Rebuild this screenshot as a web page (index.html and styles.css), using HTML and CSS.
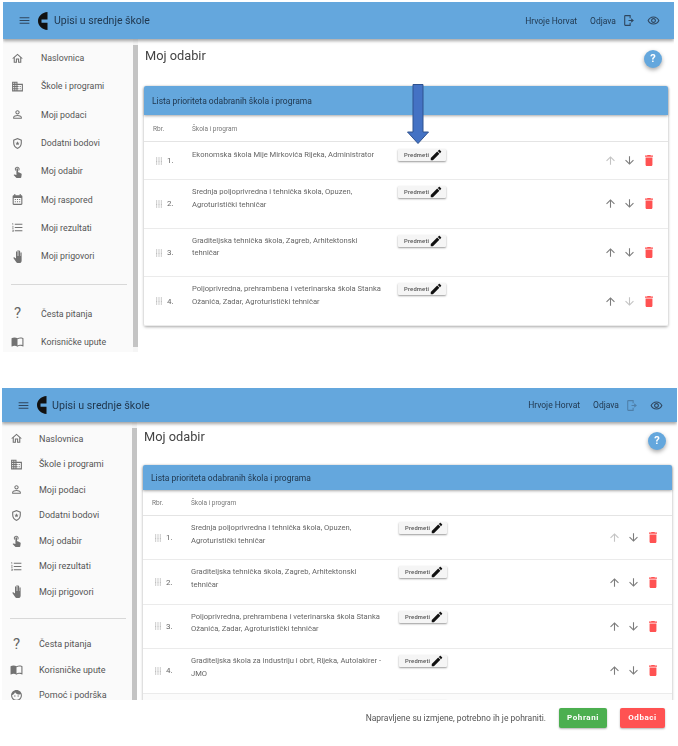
FILE: index.html
```html
<!DOCTYPE html>
<html lang="en">
  <head>
    <meta charset="UTF-8" />
    <meta name="viewport" content="width=device-width, initial-scale=1.0" />
    <title>Moj odabir</title>
    <link rel="stylesheet" href="styles.css">
  </head>

  <body>
    <svg class="sprite" aria-hidden="true">
      <symbol id="i-menu" viewBox="0 0 24 24"><path d="M3 18h18v-2H3v2zm0-5h18v-2H3v2zm0-7v2h18V6H3z"/></symbol>
      <symbol id="i-logo" viewBox="0 0 10 18"><path d="M9.500 0C4 .6 0 4.300 0 9s4 8.400 9.500 9v-7.200H3.500V7.400h6z"/></symbol>
      <symbol id="i-home" viewBox="0 0 24 24"><path d="M12 5.690l5 4.500V18h-2v-6H9v6H7v-7.810l5-4.500M12 3L2 12h3v8h6v-6h2v6h6v-8h3L12 3z"/></symbol>
      <symbol id="i-domain" viewBox="0 0 24 24"><path d="M12 7V3H2v18h20V7H12zM6 19H4v-2h2v2zm0-4H4v-2h2v2zm0-4H4V9h2v2zm0-4H4V5h2v2zm4 12H8v-2h2v2zm0-4H8v-2h2v2zm0-4H8V9h2v2zm0-4H8V5h2v2zm10 12h-8v-2h2v-2h-2v-2h2v-2h-2V9h8v10zm-2-8h-2v2h2v-2zm0 4h-2v2h2v-2z"/></symbol>
      <symbol id="i-person" viewBox="0 0 24 24"><path d="M12 5.900c1.160 0 2.100.94 2.100 2.100s-.94 2.100-2.100 2.100S9.900 9.160 9.900 8s.94-2.100 2.100-2.100m0 9c2.970 0 6.100 1.460 6.100 2.100v1.100H5.900V17c0-.64 3.130-2.100 6.100-2.100M12 4C9.790 4 8 5.790 8 8s1.790 4 4 4 4-1.790 4-4-1.790-4-4-4zm0 9c-2.670 0-8 1.340-8 4v3h16v-3c0-2.660-5.330-4-8-4z"/></symbol>
      <symbol id="i-shield" viewBox="0 0 24 24"><path d="M12 2L4 5v6c0 5 3.400 9.700 8 11 4.600-1.300 8-6 8-11V5l-8-3zm6 9c0 4-2.500 7.700-6 8.900-3.500-1.200-6-4.900-6-8.900V6.400l6-2.200 6 2.200V11z"/><path d="M12 8l1.100 2.500 2.700.2-2 1.800.6 2.600-2.400-1.400-2.400 1.400.6-2.600-2-1.800 2.700-.2z"/></symbol>
      <symbol id="i-touch" viewBox="0 0 24 24"><path d="M9 11.240V7.500C9 6.120 10.120 5 11.500 5S14 6.120 14 7.500v3.740c1.210-.81 2-2.180 2-3.740C16 5.010 13.990 3 11.500 3S7 5.010 7 7.500c0 1.560.79 2.930 2 3.740zm9.840 4.630l-4.540-2.260c-.17-.07-.35-.11-.54-.11H13v-6c0-.83-.67-1.500-1.500-1.500S10 6.670 10 7.500v10.740l-3.430-.72c-.08-.01-.15-.03-.24-.03-.31 0-.59.13-.79.33l-.79.8 4.940 4.940c.27.27.65.44 1.060.44h6.790c.75 0 1.330-.55 1.440-1.280l.75-5.270c.01-.07.02-.14.02-.2 0-.62-.38-1.160-.91-1.380z"/></symbol>
      <symbol id="i-event" viewBox="0 0 24 24"><path d="M19 4h-1V2h-2v2H8V2H6v2H5c-1.100 0-2 .9-2 2v14c0 1.100.9 2 2 2h14c1.100 0 2-.9 2-2V6c0-1.100-.9-2-2-2zm0 16H5V9h14v11zM7 11h2v2H7zm4 0h2v2h-2zm4 0h2v2h-2zm-8 4h2v2H7zm4 0h2v2h-2zm4 0h2v2h-2z"/></symbol>
      <symbol id="i-list" viewBox="0 0 24 24"><path d="M2 17h2v.5H3v1h1v.5H2v1h3v-4H2v1zm1-9h1V4H2v1h1v3zm-1 3h1.800L2 13.100v.9h3v-1H3.200L5 10.900V10H2v1zm5-6v2h14V5H7zm0 14h14v-2H7v2zm0-6h14v-2H7v2z"/></symbol>
      <symbol id="i-hand" viewBox="0 0 24 24" preserveAspectRatio="none"><path d="M23 5.500V20c0 2.200-1.800 4-4 4h-7.300c-1.080 0-2.100-.43-2.850-1.190L1 14.830s1.260-1.230 1.300-1.250c.22-.19.49-.29.79-.29.22 0 .42.06.6.16.04.01 4.310 2.460 4.310 2.460V4c0-.83.67-1.500 1.500-1.500S11 3.170 11 4v7h1V1.500c0-.83.67-1.500 1.500-1.500S15 .67 15 1.500V11h1V2.500c0-.83.67-1.500 1.500-1.500s1.500.67 1.500 1.500V11h1V5.500c0-.83.67-1.500 1.500-1.500s1.500.67 1.500 1.500z"/></symbol>
      <symbol id="i-book" viewBox="0 0 24 24"><path d="M21 5c-1.110-.35-2.330-.5-3.500-.5-1.950 0-4.050.4-5.500 1.500-1.450-1.100-3.550-1.500-5.500-1.500S2.450 4.900 1 6v14.650c0 .25.25.5.5.5.1 0 .15-.05.25-.05C3.100 20.450 5.050 20 6.500 20c1.950 0 4.050.4 5.500 1.500 1.350-.85 3.800-1.500 5.500-1.500 1.650 0 3.350.3 4.750 1.050.1.05.15.05.25.05.25 0 .5-.25.5-.5V6c-.6-.45-1.250-.75-2-1zm0 13.500c-1.100-.35-2.300-.5-3.500-.5-1.700 0-4.150.65-5.500 1.500V8c1.350-.85 3.800-1.500 5.500-1.500 1.200 0 2.400.15 3.500.5v11.500z"/></symbol>
      <symbol id="i-face" viewBox="0 0 24 24"><path d="M9 11.750c-.69 0-1.250.56-1.250 1.250s.56 1.250 1.250 1.250 1.250-.56 1.250-1.250-.56-1.250-1.250-1.250zm6 0c-.69 0-1.250.56-1.250 1.250s.56 1.250 1.250 1.250 1.250-.56 1.250-1.250-.56-1.250-1.250-1.250zM12 2C6.480 2 2 6.480 2 12s4.480 10 10 10 10-4.480 10-10S17.520 2 12 2zm0 18c-4.410 0-8-3.590-8-8 0-.29.02-.58.05-.86 2.360-1.050 4.230-2.980 5.210-5.370C11.070 8.330 14.050 10 17.420 10c.78 0 1.530-.09 2.250-.26.21.71.33 1.470.33 2.260 0 4.410-3.590 8-8 8z"/></symbol>
      <symbol id="i-logout" viewBox="0 0 24 24"><path d="M6 2h10v6h-2V4H6v16h8v-4h2v6H6a2 2 0 0 1-2-2V4a2 2 0 0 1 2-2zM12 11h5V8l5 4-5 4v-3h-5z"/></symbol>
      <symbol id="i-eye" viewBox="0 0 24 24"><path d="M12 6.500c3.790 0 7.170 2.130 8.820 5.500-1.650 3.370-5.020 5.500-8.820 5.500S4.830 15.370 3.180 12C4.830 8.630 8.210 6.500 12 6.500m0-2C7 4.500 2.730 7.610 1 12c1.730 4.390 6 7.500 11 7.500s9.270-3.110 11-7.500c-1.730-4.390-6-7.500-11-7.500zm0 5c1.380 0 2.500 1.120 2.500 2.500s-1.120 2.500-2.500 2.500-2.500-1.120-2.500-2.500 1.120-2.500 2.500-2.500m0-2c-2.480 0-4.500 2.020-4.500 4.500s2.020 4.500 4.500 4.500 4.500-2.020 4.500-4.500-2.020-4.500-4.500-4.500z"/></symbol>
      <symbol id="i-edit" viewBox="0 0 24 24"><path d="M3 17.250V21h3.750L17.810 9.940l-3.750-3.750L3 17.250zM20.710 7.040c.39-.39.39-1.020 0-1.410l-2.340-2.340c-.39-.39-1.020-.39-1.410 0l-1.830 1.830 3.750 3.750 1.830-1.830z"/></symbol>
      <symbol id="i-up" viewBox="0 0 24 24"><path d="M4 12l1.410 1.410L11 7.830V20h2V7.830l5.580 5.590L20 12l-8-8-8 8z"/></symbol>
      <symbol id="i-down" viewBox="0 0 24 24"><path d="M20 12l-1.410-1.410L13 16.170V4h-2v12.170l-5.580-5.590L4 12l8 8 8-8z"/></symbol>
      <symbol id="i-delete" viewBox="5 3 14 18" preserveAspectRatio="none"><path d="M6 19c0 1.100.9 2 2 2h8c1.100 0 2-.9 2-2V7H6v12zM19 4h-3.500l-1-1h-5l-1 1H5v2h14V4z"/></symbol>
      <symbol id="i-drag" viewBox="0 0 10 12"><path d="M0 0h2v2H0zm4 0h2v2H4zm4 0h2v2H8zM0 3.300h2v2H0zm4 0h2v2H4zm4 0h2v2H8zM0 6.600h2v2H0zm4 0h2v2H4zm4 0h2v2H8zM0 10h2v2H0zm4 0h2v2H4zm4 0h2v2H8z"/></symbol>
    </svg>

    <!-- first screen -->
    <section class="screen screenTop">
      <header class="topBar">
        <svg class="barIcon menuIcon"><use href="#i-menu"/></svg>
        <svg class="logo"><use href="#i-logo"/></svg>
        <span class="appTitle">Upisi u srednje škole</span>
        <span class="userName">Hrvoje Horvat</span>
        <span class="logoutLabel">Odjava</span>
        <svg class="barIcon logoutIcon"><use href="#i-logout"/></svg>
        <svg class="barIcon eyeIcon"><use href="#i-eye"/></svg>
      </header>
      <div class="body">
        <nav class="sideNav">
          <a class="navItem"><svg class="navIcon"><use href="#i-home"/></svg>Naslovnica</a>
          <a class="navItem"><svg class="navIcon"><use href="#i-domain"/></svg>Škole i programi</a>
          <a class="navItem"><svg class="navIcon"><use href="#i-person"/></svg>Moji podaci</a>
          <a class="navItem"><svg class="navIcon"><use href="#i-shield"/></svg>Dodatni bodovi</a>
          <a class="navItem"><svg class="navIcon"><use href="#i-touch"/></svg>Moj odabir</a>
          <a class="navItem"><svg class="navIcon"><use href="#i-event"/></svg>Moj raspored</a>
          <a class="navItem"><svg class="navIcon"><use href="#i-list"/></svg>Moji rezultati</a>
          <a class="navItem"><svg class="navIcon navHand"><use href="#i-hand"/></svg>Moji prigovori</a>
          <hr class="navDivider" />
          <a class="navItem"><span class="navIcon navQuestion">?</span>Česta pitanja</a>
          <a class="navItem"><svg class="navIcon"><use href="#i-book"/></svg>Korisničke upute</a>
        </nav>
        <div class="scrollTrack"><span class="scrollThumb"></span></div>
        <main class="content">
          <div class="pageHead">
            <h1 class="pageTitle">Moj odabir</h1>
            <span class="helpButton">?</span>
          </div>
          <div class="card">
            <h2 class="cardHeader">Lista prioriteta odabranih škola i programa</h2>
            <div class="tableHead"><span>Rbr.</span><span>Škola i program</span></div>
            <div class="row rowShort">
              <div class="rowIndex"><svg class="dragIcon"><use href="#i-drag"/></svg>1.</div>
              <div class="rowName">Ekonomska škola Mije Mirkovića Rijeka, Administrator</div>
              <div class="rowSubject"><span class="subjectButton">Predmeti<svg class="editIcon"><use href="#i-edit"/></svg></span></div>
              <div class="rowActions"><svg class="off"><use href="#i-up"/></svg><svg><use href="#i-down"/></svg><svg class="del"><use href="#i-delete"/></svg></div>
            </div>
            <div class="row">
              <div class="rowIndex"><svg class="dragIcon"><use href="#i-drag"/></svg>2.</div>
              <div class="rowName">Srednja poljoprivredna i tehnička škola, Opuzen, Agroturistički tehničar</div>
              <div class="rowSubject"><span class="subjectButton">Predmeti<svg class="editIcon"><use href="#i-edit"/></svg></span></div>
              <div class="rowActions"><svg><use href="#i-up"/></svg><svg><use href="#i-down"/></svg><svg class="del"><use href="#i-delete"/></svg></div>
            </div>
            <div class="row">
              <div class="rowIndex"><svg class="dragIcon"><use href="#i-drag"/></svg>3.</div>
              <div class="rowName">Graditeljska tehnička škola, Zagreb, Arhitektonski tehničar</div>
              <div class="rowSubject"><span class="subjectButton">Predmeti<svg class="editIcon"><use href="#i-edit"/></svg></span></div>
              <div class="rowActions"><svg><use href="#i-up"/></svg><svg><use href="#i-down"/></svg><svg class="del"><use href="#i-delete"/></svg></div>
            </div>
            <div class="row">
              <div class="rowIndex"><svg class="dragIcon"><use href="#i-drag"/></svg>4.</div>
              <div class="rowName">Poljoprivredna, prehrambena i veterinarska škola Stanka Ožanića, Zadar, Agroturistički tehničar</div>
              <div class="rowSubject"><span class="subjectButton">Predmeti<svg class="editIcon"><use href="#i-edit"/></svg></span></div>
              <div class="rowActions"><svg><use href="#i-up"/></svg><svg class="off"><use href="#i-down"/></svg><svg class="del"><use href="#i-delete"/></svg></div>
            </div>
          </div>
        </main>
      </div>
      <!-- arrow drawn on top of the screenshot -->
      <svg class="bigArrow" viewBox="0 0 22 60"><path d="M6 .5h10v47.500h5.500L11 59.500.5 48H6z"/></svg>
    </section>

    <!-- second screen -->
    <section class="screen screenBottom">
      <header class="topBar">
        <svg class="barIcon menuIcon"><use href="#i-menu"/></svg>
        <svg class="logo"><use href="#i-logo"/></svg>
        <span class="appTitle">Upisi u srednje škole</span>
        <span class="userName">Hrvoje Horvat</span>
        <span class="logoutLabel">Odjava</span>
        <svg class="barIcon logoutIcon off"><use href="#i-logout"/></svg>
        <svg class="barIcon eyeIcon"><use href="#i-eye"/></svg>
      </header>
      <div class="body">
        <nav class="sideNav">
          <a class="navItem"><svg class="navIcon"><use href="#i-home"/></svg>Naslovnica</a>
          <a class="navItem"><svg class="navIcon"><use href="#i-domain"/></svg>Škole i programi</a>
          <a class="navItem"><svg class="navIcon"><use href="#i-person"/></svg>Moji podaci</a>
          <a class="navItem"><svg class="navIcon"><use href="#i-shield"/></svg>Dodatni bodovi</a>
          <a class="navItem"><svg class="navIcon"><use href="#i-touch"/></svg>Moj odabir</a>
          <a class="navItem"><svg class="navIcon"><use href="#i-list"/></svg>Moji rezultati</a>
          <a class="navItem"><svg class="navIcon navHand"><use href="#i-hand"/></svg>Moji prigovori</a>
          <hr class="navDivider" />
          <a class="navItem"><span class="navIcon navQuestion">?</span>Česta pitanja</a>
          <a class="navItem"><svg class="navIcon"><use href="#i-book"/></svg>Korisničke upute</a>
          <a class="navItem"><svg class="navIcon"><use href="#i-face"/></svg>Pomoć i podrška</a>
        </nav>
        <div class="scrollTrack"><span class="scrollThumb"></span></div>
        <main class="content">
          <div class="pageHead">
            <h1 class="pageTitle">Moj odabir</h1>
            <span class="helpButton">?</span>
          </div>
          <div class="card">
            <h2 class="cardHeader">Lista prioriteta odabranih škola i programa</h2>
            <div class="tableHead"><span>Rbr.</span><span>Škola i program</span></div>
            <div class="row">
              <div class="rowIndex"><svg class="dragIcon"><use href="#i-drag"/></svg>1.</div>
              <div class="rowName">Srednja poljoprivredna i tehnička škola, Opuzen, Agroturistički tehničar</div>
              <div class="rowSubject"><span class="subjectButton">Predmeti<svg class="editIcon"><use href="#i-edit"/></svg></span></div>
              <div class="rowActions"><svg class="off"><use href="#i-up"/></svg><svg><use href="#i-down"/></svg><svg class="del"><use href="#i-delete"/></svg></div>
            </div>
            <div class="row">
              <div class="rowIndex"><svg class="dragIcon"><use href="#i-drag"/></svg>2.</div>
              <div class="rowName">Graditeljska tehnička škola, Zagreb, Arhitektonski tehničar</div>
              <div class="rowSubject"><span class="subjectButton">Predmeti<svg class="editIcon"><use href="#i-edit"/></svg></span></div>
              <div class="rowActions"><svg><use href="#i-up"/></svg><svg><use href="#i-down"/></svg><svg class="del"><use href="#i-delete"/></svg></div>
            </div>
            <div class="row">
              <div class="rowIndex"><svg class="dragIcon"><use href="#i-drag"/></svg>3.</div>
              <div class="rowName">Poljoprivredna, prehrambena i veterinarska škola Stanka Ožanića, Zadar, Agroturistički tehničar</div>
              <div class="rowSubject"><span class="subjectButton">Predmeti<svg class="editIcon"><use href="#i-edit"/></svg></span></div>
              <div class="rowActions"><svg><use href="#i-up"/></svg><svg><use href="#i-down"/></svg><svg class="del"><use href="#i-delete"/></svg></div>
            </div>
            <div class="row">
              <div class="rowIndex"><svg class="dragIcon"><use href="#i-drag"/></svg>4.</div>
              <div class="rowName">Graditeljska škola za industriju i obrt, Rijeka, Autolakirer - JMO</div>
              <div class="rowSubject"><span class="subjectButton">Predmeti<svg class="editIcon"><use href="#i-edit"/></svg></span></div>
              <div class="rowActions"><svg><use href="#i-up"/></svg><svg><use href="#i-down"/></svg><svg class="del"><use href="#i-delete"/></svg></div>
            </div>
            <div class="row rowLast">
              <div class="rowIndex"></div>
              <div class="rowName"></div>
              <div class="rowSubject"><span class="subjectButton"></span></div>
              <div class="rowActions"></div>
            </div>
          </div>
        </main>
      </div>
    </section>
    <footer class="saveBar">
      <span class="saveText">Napravljene su izmjene, potrebno ih je pohraniti.</span>
      <span class="saveButton saveOk">Pohrani</span>
      <span class="saveButton saveCancel">Odbaci</span>
    </footer>
  </body>
</html>
```

FILE: styles.css
```css
* {
  margin: 0;
  padding: 0;
  box-sizing: border-box;
}
body {
  background-color: #fff;
  font-family: Roboto, "Liberation Sans", sans-serif;
  color: #555;
  width: 678px;
  height: 746px;
  overflow: hidden;
}
.sprite {
  display: none;
}
.screen {
  position: relative;
  overflow: hidden;
  filter: blur(0.45px);
  display: flex;
  flex-direction: column;
}
.screenTop {
  margin: 2px 4px 0 3px;
  height: 350px;
  --bar: 37px;
  --nav-row: 28.3px;
  --nav-top: 5px;
  --nav-size: 8.8px;
  --nav-gap: 17px;
  --nav-rule: 14px;
  --title-size: 10.5px;
  --title-gap: 6px;
  --head-h: 47px;
  --head-top: 9px;
  --help-top: 2px;
  --card-h: 29px;
  --thead-h: 27px;
  --row-h: 48.7px;
  --name-w: 206px;
  --pad-right: 6px;
  --thumb-end: 5px;
}
.screenBottom {
  margin: 36px 1px 0 2px;
  height: 312px;
  --bar: 34px;
  --nav-row: 25.5px;
  --nav-top: 4px;
  --nav-size: 9px;
  --nav-gap: 16px;
  --nav-rule: 13px;
  --title-size: 10.7px;
  --title-gap: 5px;
  --head-h: 43px;
  --head-top: 7px;
  --help-top: 3px;
  --card-h: 25px;
  --thead-h: 26px;
  --row-h: 44.4px;
  --name-w: 208px;
  --pad-right: 5px;
  --thumb-end: 0px;
}

/* top bar */
.topBar {
  height: var(--bar);
  flex-shrink: 0;
  background-color: #64a7dd;
  box-shadow: 0 2px 3px rgba(0, 0, 0, 0.35);
  display: flex;
  align-items: center;
  padding: 0 14px 0 15px;
  color: #21384f;
  z-index: 1;
  font-size: 8.5px;
}
.barIcon {
  width: 13px;
  height: 13px;
  fill: #2f465e;
  flex-shrink: 0;
}
.logo {
  width: 10px;
  height: 18px;
  margin-left: 7px;
  fill: #111;
}
.appTitle {
  margin-left: var(--title-gap);
  font-size: var(--title-size);
  flex: 1;
}
.logoutLabel {
  margin-left: 13px;
}
.logoutIcon {
  margin-left: 6px;
}
.logoutIcon.off {
  opacity: 0.4;
}
.eyeIcon {
  margin-left: 12px;
}

/* side menu */
.body {
  display: flex;
  flex: 1;
  min-height: 0;
}
.sideNav {
  width: 130px;
  flex-shrink: 0;
  background-color: #fafafa;
  padding-top: var(--nav-top);
  overflow: hidden;
}
.scrollTrack {
  width: 5px;
  flex-shrink: 0;
  background-color: #f5f5f5;
  padding: 6px 0 var(--thumb-end);
  display: flex;
}
.scrollThumb {
  flex: 1;
  background-color: #c4c4c4;
}
.navItem {
  height: var(--nav-row);
  display: flex;
  align-items: center;
  font-size: var(--nav-size);
  color: #555;
  padding-left: 8px;
}
.navIcon {
  width: 13px;
  height: 13px;
  fill: #727272;
  margin-right: var(--nav-gap);
  flex-shrink: 0;
}
.navHand {
  width: 9px;
  margin-left: 2px;
  margin-right: calc(var(--nav-gap) + 2px);
}
.navQuestion {
  font-size: 15px;
  text-align: center;
  line-height: 13px;
  color: #666;
}
.navDivider {
  border: 0;
  border-top: 1px solid #d8d8d8;
  margin: var(--nav-rule) 6px var(--nav-rule) 8px;
}

/* page */
.content {
  flex: 1;
  min-width: 0;
  padding: 0 var(--pad-right) 0 6px;
}
.pageHead {
  height: var(--head-h);
  display: flex;
  justify-content: space-between;
  align-items: flex-start;
  padding: var(--head-top) 6px 0 1px;
}
.pageTitle {
  font-size: 12.8px;
  font-weight: 400;
  color: #444;
}
.helpButton {
  width: 18px;
  height: 18px;
  margin-top: var(--help-top);
  border-radius: 50%;
  background-color: #64a7dd;
  color: #fff;
  font-size: 11px;
  font-weight: 700;
  text-align: center;
  line-height: 18px;
  box-shadow: 0 2px 4px rgba(0, 0, 0, 0.35);
}
.card {
  border-radius: 2px;
  box-shadow: 0 1px 3px rgba(0, 0, 0, 0.35);
  background-color: #fff;
}
.cardHeader {
  height: var(--card-h);
  background-color: #64a7dd;
  border-radius: 2px 2px 0 0;
  box-shadow: 0 1px 3px rgba(0, 0, 0, 0.35);
  color: #21384f;
  font-size: 8.5px;
  font-weight: 400;
  padding-left: 8px;
  display: flex;
  align-items: center;
}
.tableHead {
  height: var(--thead-h);
  display: grid;
  grid-template-columns: 39px 1fr;
  align-items: center;
  padding: 1px 0 0 9px;
  font-size: 6.5px;
  color: #777;
  border-bottom: 1px solid #e4e4e4;
}
.row {
  height: var(--row-h);
  display: grid;
  grid-template-columns: 48px var(--name-w) 1fr auto;
  border-bottom: 1px solid #ebebeb;
  --row-top: 6px;
}
.rowShort {
  height: 38px;
  --row-top: 7px;
}
.rowLast {
  background-color: #fbfbfb;
}
.rowIndex {
  display: flex;
  align-items: center;
  padding-left: 12px;
  font-size: 8px;
  color: #666;
}
.dragIcon {
  width: 6px;
  height: 8px;
  fill: #aaa;
  margin-right: 5px;
}
.rowName {
  font-size: 7.6px;
  line-height: 12.6px;
  padding-top: var(--row-top);
  padding-right: 16px;
  color: #666;
}
.rowSubject {
  display: flex;
  align-items: flex-start;
  padding-top: var(--row-top);
}
.subjectButton {
  display: flex;
  align-items: center;
  justify-content: space-between;
  width: 48px;
  height: 12px;
  padding: 0 4px 0 6px;
  font-size: 5.8px;
  font-weight: 500;
  letter-spacing: 0.2px;
  color: #555;
  background-color: #f5f5f5;
  border-radius: 1px;
  box-shadow: 0 1px 2px rgba(0, 0, 0, 0.4);
}
.editIcon {
  width: 14px;
  height: 14px;
  fill: #111;
  flex-shrink: 0;
}
.rowActions {
  display: flex;
  align-items: center;
  gap: 6px;
  padding: 0 13px 0 0;
}
.rowActions svg {
  width: 13px;
  height: 13px;
  fill: #7c7c7c;
}
.rowActions svg.off {
  opacity: 0.45;
}
.rowActions svg.del {
  width: 8px;
  height: 11px;
  margin: 0 2.5px;
  fill: #ff5252;
}
.bigArrow {
  position: absolute;
  left: 404px;
  top: 82px;
  width: 22px;
  height: 60px;
  fill: #4472c4;
  stroke: #2f528f;
  stroke-width: 1;
  z-index: 2;
}

/* save bar */
.saveBar {
  height: 46px;
  display: flex;
  align-items: center;
  justify-content: flex-end;
  padding: 0 13px 11px 0;
  font-size: 8.5px;
  color: #555;
  background-color: #fff;
  filter: blur(0.45px);
}
.saveText {
  margin-right: 13px;
}
.saveButton {
  height: 20px;
  border-radius: 2px;
  color: #fff;
  font-size: 8px;
  font-weight: 700;
  letter-spacing: 0.6px;
  display: flex;
  align-items: center;
  justify-content: center;
  box-shadow: 0 1px 2px rgba(0, 0, 0, 0.3);
}
.saveOk {
  width: 48px;
  background-color: #4caf50;
  margin-right: 13px;
}
.saveCancel {
  width: 45px;
  background-color: #ff5252;
}
```
